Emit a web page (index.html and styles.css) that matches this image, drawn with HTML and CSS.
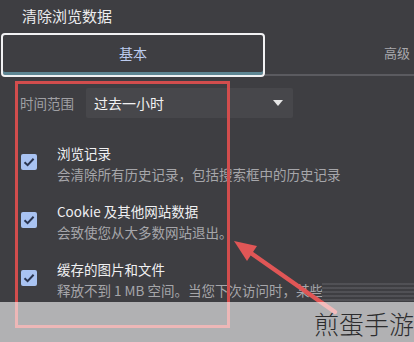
FILE: index.html
```html
<!DOCTYPE html>
<html lang="zh-CN">
<head>
<meta charset="utf-8">
<link rel="stylesheet" href="styles.css">
</head>
<body>
<div class="page">
  <div class="title">清除浏览数据</div>
  <div class="tabs">
    <div class="tab tab-active">基本</div>
    <div class="tab tab-rest">高级</div>
  </div>
  <div class="range">
    <div class="range-label">时间范围</div>
    <div class="select">
      <span>过去一小时</span>
      <span class="caret"></span>
    </div>
  </div>
  <div class="items">
    <div class="item">
      <div class="check"><svg viewBox="0 0 16 16" width="16" height="16"><path d="M3.5 8.3 L6.6 11.2 L12.6 4.8" fill="none" stroke="#2a3550" stroke-width="2"/></svg></div>
      <div class="texts">
        <div class="item-title">浏览记录</div>
        <div class="item-sub">会清除所有历史记录，包括搜索框中的历史记录</div>
      </div>
    </div>
    <div class="item">
      <div class="check"><svg viewBox="0 0 16 16" width="16" height="16"><path d="M3.5 8.3 L6.6 11.2 L12.6 4.8" fill="none" stroke="#2a3550" stroke-width="2"/></svg></div>
      <div class="texts">
        <div class="item-title">Cookie 及其他网站数据</div>
        <div class="item-sub">会致使您从大多数网站退出。</div>
      </div>
    </div>
    <div class="item">
      <div class="check"><svg viewBox="0 0 16 16" width="16" height="16"><path d="M3.5 8.3 L6.6 11.2 L12.6 4.8" fill="none" stroke="#2a3550" stroke-width="2"/></svg></div>
      <div class="texts">
        <div class="item-title">缓存的图片和文件</div>
        <div class="item-sub">释放不到 1 MB 空间。当您下次访问时，某些</div>
      </div>
    </div>
  </div>

  <div class="glitch"></div>
  <div class="redbox"></div>
  <svg class="arrow" width="414" height="342" viewBox="0 0 414 342">
    <line x1="335" y1="312" x2="248" y2="251" stroke="#e05656" stroke-width="4.5" stroke-linecap="round"/>
    <polygon points="234,241 257,246 247,261" fill="#e05656"/>
  </svg>
  <div class="band"></div>
  <div class="watermark">煎蛋手游</div>
</div>
</body>
</html>
```

FILE: styles.css
```css
* { box-sizing: border-box; }
html, body { margin: 0; padding: 0; }
body {
  font-family: "Noto Sans CJK SC", "Noto Sans", sans-serif;
  background: #3e3e42;
}
.page {
  position: relative;
  width: 414px;
  height: 342px;
  overflow: hidden;
  background: #3e3e42;
  color: #e8e8ea;
}
.title {
  height: 33px;
  padding: 6px 0 0 22px;
  font-size: 15px;
  line-height: 20px;
  color: #ececee;
}
.tabs {
  display: flex;
  height: 44px;
}
.tab-active {
  width: 264px;
  margin-left: 1px;
  border: 2px solid #f2f2f4;
  border-radius: 4px;
  box-shadow: inset 0 -3px 0 #5f8794;
  display: flex;
  align-items: center;
  justify-content: center;
  padding-bottom: 5px;
  font-size: 14px;
  color: #bccbee;
}
.tab-rest {
  flex: 1;
  border-bottom: 2px solid #5b5b60;
  margin-bottom: 1px;
  display: flex;
  align-items: center;
  justify-content: flex-end;
  padding-right: 4px;
  padding-bottom: 2px;
  font-size: 13px;
  color: #a8a8ac;
}
.range {
  display: flex;
  align-items: center;
  height: 30px;
  margin-top: 11px;
  padding-left: 20px;
}
.range-label {
  width: 66px;
  font-size: 13.5px;
  color: #a0a0a4;
}
.select {
  width: 207px;
  height: 30px;
  background: #47474b;
  border-radius: 2px;
  display: flex;
  align-items: center;
  justify-content: space-between;
  padding: 0 8px 0 8px;
  font-size: 14px;
  color: #f2f2f2;
}
.caret {
  width: 0;
  height: 0;
  border-left: 5px solid transparent;
  border-right: 5px solid transparent;
  border-top: 6px solid #e6e6e6;
  margin-right: 2px;
}
.items {
  margin-top: 25px;
}
.item {
  display: flex;
  align-items: flex-start;
  height: 58px;
  padding-left: 21px;
}
.check {
  width: 16px;
  height: 16px;
  margin-top: 11px;
  margin-right: 20px;
  background: #a9c3f2;
  border-radius: 2px;
}
.check svg { display: block; }
.item-title {
  font-size: 13.5px;
  line-height: 20px;
  color: #f0f0f2;
}
.item-sub {
  font-size: 13.5px;
  line-height: 22px;
  color: #a6a6aa;
  white-space: nowrap;
}
.glitch {
  position: absolute;
  left: 322px;
  top: 283px;
  width: 92px;
  height: 19px;
  background: repeating-linear-gradient(to bottom, #55555a 0, #55555a 2px, #3e3e42 2px, #3e3e42 4px);
  opacity: 0.8;
}
.redbox {
  position: absolute;
  left: 15px;
  top: 81px;
  width: 215px;
  height: 247px;
  border: 3px solid #d24d4d;
}
.arrow {
  position: absolute;
  left: 0;
  top: 0;
}
.band {
  position: absolute;
  left: 0;
  top: 302px;
  width: 414px;
  height: 40px;
  background: rgba(255, 255, 255, 0.6);
}
.watermark {
  position: absolute;
  right: 0;
  top: 308px;
  font-size: 25px;
  line-height: 30px;
  font-weight: 300;
  color: #2c2c2e;
}
```
